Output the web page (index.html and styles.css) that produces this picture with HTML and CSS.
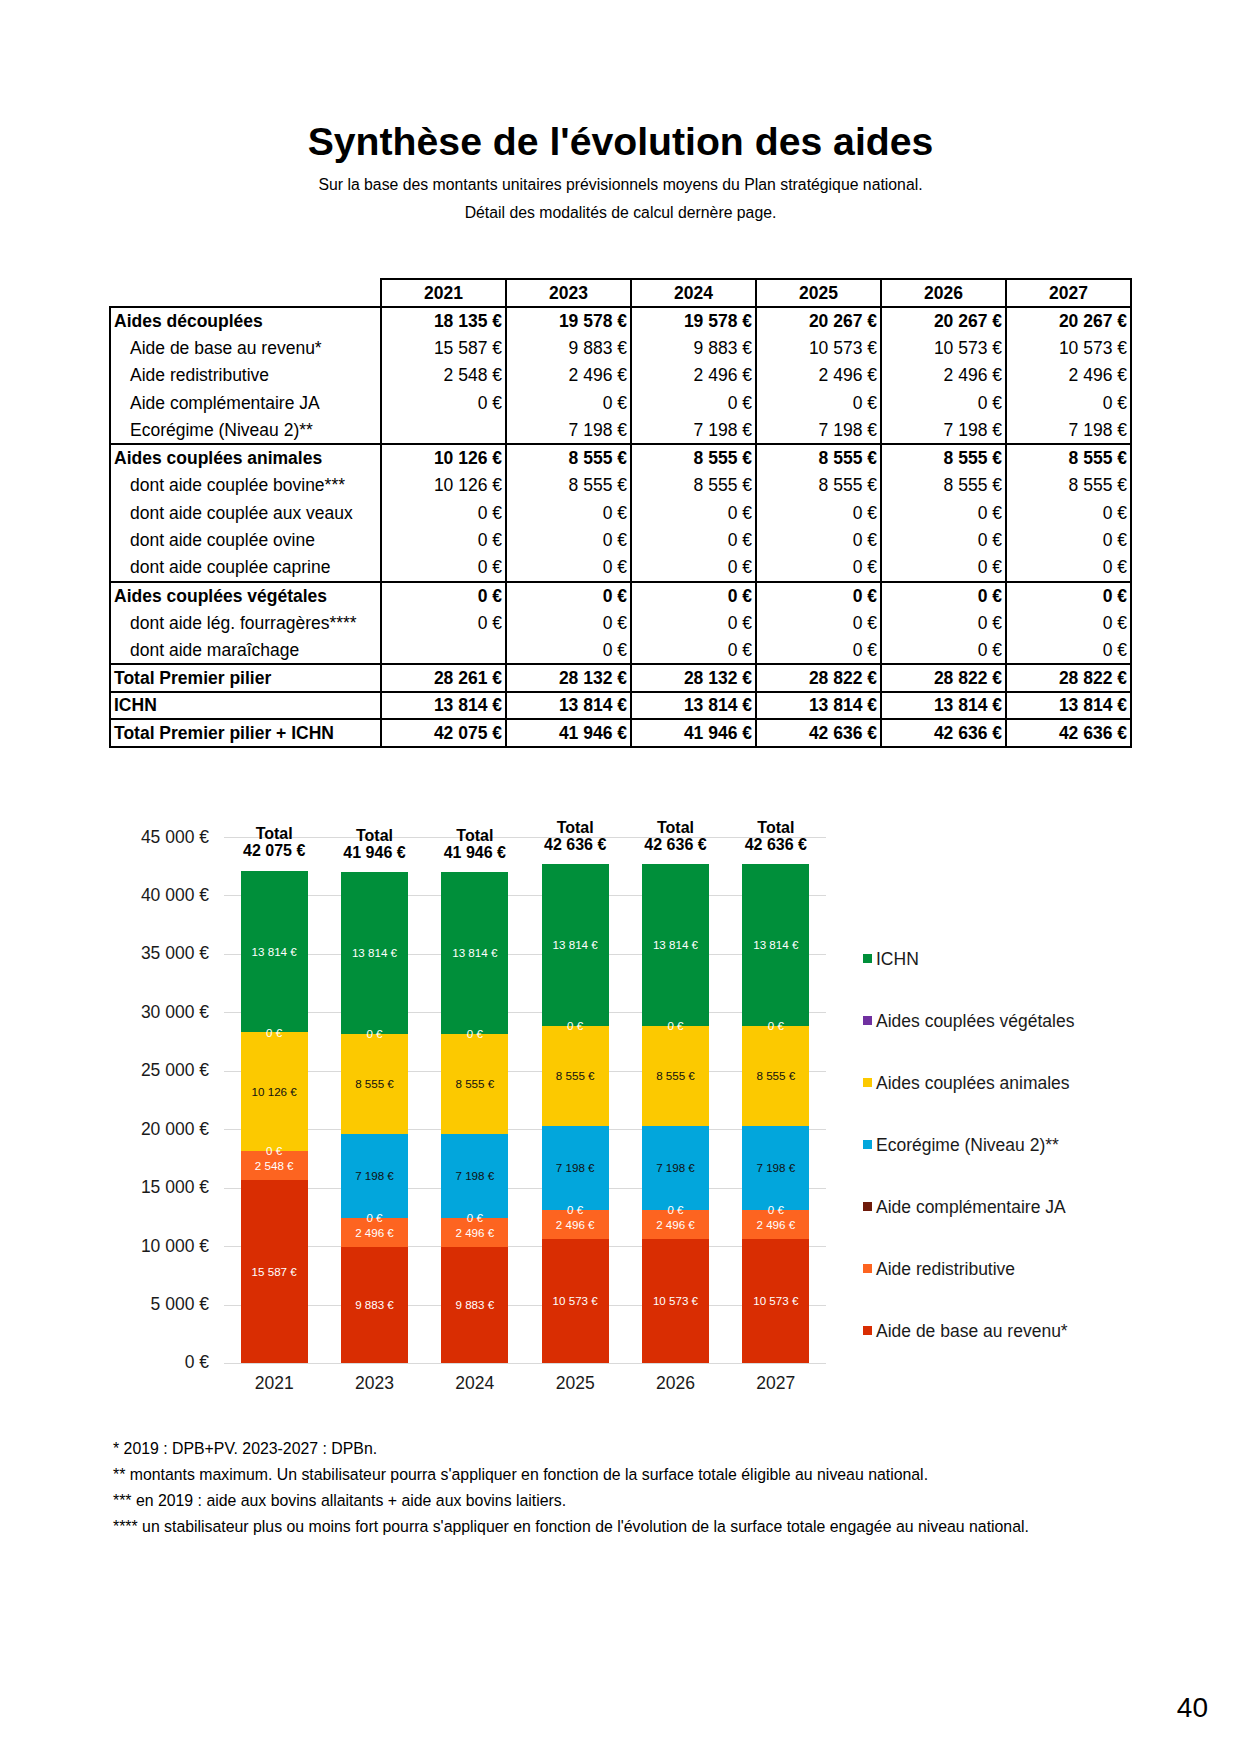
FILE: index.html
```html
<!DOCTYPE html>
<html lang="fr">
<head>
<meta charset="utf-8">
<title>Synthèse de l'évolution des aides</title>
<link rel="stylesheet" href="styles.css">
</head>
<body>
<div class="page">
  <h1 class="title">Synthèse de l'évolution des aides</h1>
  <p class="subtitle">Sur la base des montants unitaires prévisionnels moyens du Plan stratégique national.<br>Détail des modalités de calcul dernère page.</p>

  <table class="aids">
    <colgroup>
      <col class="c-label"><col><col><col><col><col><col>
    </colgroup>
    <thead>
      <tr><th class="blank"></th><th>2021</th><th>2023</th><th>2024</th><th>2025</th><th>2026</th><th>2027</th></tr>
    </thead>
    <tbody>
      <tr class="grp"><td>Aides découplées</td><td class="num">18&nbsp;135&nbsp;€</td><td class="num">19&nbsp;578&nbsp;€</td><td class="num">19&nbsp;578&nbsp;€</td><td class="num">20&nbsp;267&nbsp;€</td><td class="num">20&nbsp;267&nbsp;€</td><td class="num">20&nbsp;267&nbsp;€</td></tr>
      <tr><td class="sub">Aide de base au revenu*</td><td class="num">15&nbsp;587&nbsp;€</td><td class="num">9&nbsp;883&nbsp;€</td><td class="num">9&nbsp;883&nbsp;€</td><td class="num">10&nbsp;573&nbsp;€</td><td class="num">10&nbsp;573&nbsp;€</td><td class="num">10&nbsp;573&nbsp;€</td></tr>
      <tr><td class="sub">Aide redistributive</td><td class="num">2&nbsp;548&nbsp;€</td><td class="num">2&nbsp;496&nbsp;€</td><td class="num">2&nbsp;496&nbsp;€</td><td class="num">2&nbsp;496&nbsp;€</td><td class="num">2&nbsp;496&nbsp;€</td><td class="num">2&nbsp;496&nbsp;€</td></tr>
      <tr><td class="sub">Aide complémentaire JA</td><td class="num">0&nbsp;€</td><td class="num">0&nbsp;€</td><td class="num">0&nbsp;€</td><td class="num">0&nbsp;€</td><td class="num">0&nbsp;€</td><td class="num">0&nbsp;€</td></tr>
      <tr><td class="sub">Ecorégime (Niveau 2)**</td><td class="num"></td><td class="num">7&nbsp;198&nbsp;€</td><td class="num">7&nbsp;198&nbsp;€</td><td class="num">7&nbsp;198&nbsp;€</td><td class="num">7&nbsp;198&nbsp;€</td><td class="num">7&nbsp;198&nbsp;€</td></tr>
      <tr class="grp"><td>Aides couplées animales</td><td class="num">10&nbsp;126&nbsp;€</td><td class="num">8&nbsp;555&nbsp;€</td><td class="num">8&nbsp;555&nbsp;€</td><td class="num">8&nbsp;555&nbsp;€</td><td class="num">8&nbsp;555&nbsp;€</td><td class="num">8&nbsp;555&nbsp;€</td></tr>
      <tr><td class="sub">dont aide couplée bovine***</td><td class="num">10&nbsp;126&nbsp;€</td><td class="num">8&nbsp;555&nbsp;€</td><td class="num">8&nbsp;555&nbsp;€</td><td class="num">8&nbsp;555&nbsp;€</td><td class="num">8&nbsp;555&nbsp;€</td><td class="num">8&nbsp;555&nbsp;€</td></tr>
      <tr><td class="sub">dont aide couplée aux veaux</td><td class="num">0&nbsp;€</td><td class="num">0&nbsp;€</td><td class="num">0&nbsp;€</td><td class="num">0&nbsp;€</td><td class="num">0&nbsp;€</td><td class="num">0&nbsp;€</td></tr>
      <tr><td class="sub">dont aide couplée ovine</td><td class="num">0&nbsp;€</td><td class="num">0&nbsp;€</td><td class="num">0&nbsp;€</td><td class="num">0&nbsp;€</td><td class="num">0&nbsp;€</td><td class="num">0&nbsp;€</td></tr>
      <tr><td class="sub">dont aide couplée caprine</td><td class="num">0&nbsp;€</td><td class="num">0&nbsp;€</td><td class="num">0&nbsp;€</td><td class="num">0&nbsp;€</td><td class="num">0&nbsp;€</td><td class="num">0&nbsp;€</td></tr>
      <tr class="grp"><td>Aides couplées végétales</td><td class="num">0&nbsp;€</td><td class="num">0&nbsp;€</td><td class="num">0&nbsp;€</td><td class="num">0&nbsp;€</td><td class="num">0&nbsp;€</td><td class="num">0&nbsp;€</td></tr>
      <tr><td class="sub">dont aide lég. fourragères****</td><td class="num">0&nbsp;€</td><td class="num">0&nbsp;€</td><td class="num">0&nbsp;€</td><td class="num">0&nbsp;€</td><td class="num">0&nbsp;€</td><td class="num">0&nbsp;€</td></tr>
      <tr><td class="sub">dont aide maraîchage</td><td class="num"></td><td class="num">0&nbsp;€</td><td class="num">0&nbsp;€</td><td class="num">0&nbsp;€</td><td class="num">0&nbsp;€</td><td class="num">0&nbsp;€</td></tr>
      <tr class="grp"><td>Total Premier pilier</td><td class="num">28&nbsp;261&nbsp;€</td><td class="num">28&nbsp;132&nbsp;€</td><td class="num">28&nbsp;132&nbsp;€</td><td class="num">28&nbsp;822&nbsp;€</td><td class="num">28&nbsp;822&nbsp;€</td><td class="num">28&nbsp;822&nbsp;€</td></tr>
      <tr class="grp"><td>ICHN</td><td class="num">13&nbsp;814&nbsp;€</td><td class="num">13&nbsp;814&nbsp;€</td><td class="num">13&nbsp;814&nbsp;€</td><td class="num">13&nbsp;814&nbsp;€</td><td class="num">13&nbsp;814&nbsp;€</td><td class="num">13&nbsp;814&nbsp;€</td></tr>
      <tr class="grp last"><td>Total Premier pilier + ICHN</td><td class="num">42&nbsp;075&nbsp;€</td><td class="num">41&nbsp;946&nbsp;€</td><td class="num">41&nbsp;946&nbsp;€</td><td class="num">42&nbsp;636&nbsp;€</td><td class="num">42&nbsp;636&nbsp;€</td><td class="num">42&nbsp;636&nbsp;€</td></tr>
    </tbody>
  </table>

  <section class="chart">
    <div class="yaxis">
      <span>45 000 €</span><span>40 000 €</span><span>35 000 €</span><span>30 000 €</span><span>25 000 €</span><span>20 000 €</span><span>15 000 €</span><span>10 000 €</span><span>5 000 €</span><span>0 €</span>
    </div>
    <div class="plotcol">
      <div class="plot">
        <div class="cat">
          <div class="total">Total<br>42 075 €</div>
          <div class="stack">
            <div class="seg base" style="height:182.20px"><span>15 587 €</span></div>
            <div class="seg redis" style="height:29.78px"><span>2 548 €</span></div>
            <div class="seg ja" style="height:0px"><span>0 €</span></div>
            <div class="seg eco" style="height:0px"></div>
            <div class="seg anim" style="height:118.36px"><span>10 126 €</span></div>
            <div class="seg veg" style="height:0px"><span>0 €</span></div>
            <div class="seg ichn" style="height:161.47px"><span>13 814 €</span></div>
          </div>
        </div>
        <div class="cat">
          <div class="total">Total<br>41 946 €</div>
          <div class="stack">
            <div class="seg base" style="height:115.52px"><span>9 883 €</span></div>
            <div class="seg redis" style="height:29.18px"><span>2 496 €</span></div>
            <div class="seg ja" style="height:0px"><span>0 €</span></div>
            <div class="seg eco" style="height:84.14px"><span>7 198 €</span></div>
            <div class="seg anim" style="height:100.00px"><span>8 555 €</span></div>
            <div class="seg veg" style="height:0px"><span>0 €</span></div>
            <div class="seg ichn" style="height:161.47px"><span>13 814 €</span></div>
          </div>
        </div>
        <div class="cat">
          <div class="total">Total<br>41 946 €</div>
          <div class="stack">
            <div class="seg base" style="height:115.52px"><span>9 883 €</span></div>
            <div class="seg redis" style="height:29.18px"><span>2 496 €</span></div>
            <div class="seg ja" style="height:0px"><span>0 €</span></div>
            <div class="seg eco" style="height:84.14px"><span>7 198 €</span></div>
            <div class="seg anim" style="height:100.00px"><span>8 555 €</span></div>
            <div class="seg veg" style="height:0px"><span>0 €</span></div>
            <div class="seg ichn" style="height:161.47px"><span>13 814 €</span></div>
          </div>
        </div>
        <div class="cat">
          <div class="total">Total<br>42 636 €</div>
          <div class="stack">
            <div class="seg base" style="height:123.59px"><span>10 573 €</span></div>
            <div class="seg redis" style="height:29.18px"><span>2 496 €</span></div>
            <div class="seg ja" style="height:0px"><span>0 €</span></div>
            <div class="seg eco" style="height:84.14px"><span>7 198 €</span></div>
            <div class="seg anim" style="height:100.00px"><span>8 555 €</span></div>
            <div class="seg veg" style="height:0px"><span>0 €</span></div>
            <div class="seg ichn" style="height:161.47px"><span>13 814 €</span></div>
          </div>
        </div>
        <div class="cat">
          <div class="total">Total<br>42 636 €</div>
          <div class="stack">
            <div class="seg base" style="height:123.59px"><span>10 573 €</span></div>
            <div class="seg redis" style="height:29.18px"><span>2 496 €</span></div>
            <div class="seg ja" style="height:0px"><span>0 €</span></div>
            <div class="seg eco" style="height:84.14px"><span>7 198 €</span></div>
            <div class="seg anim" style="height:100.00px"><span>8 555 €</span></div>
            <div class="seg veg" style="height:0px"><span>0 €</span></div>
            <div class="seg ichn" style="height:161.47px"><span>13 814 €</span></div>
          </div>
        </div>
        <div class="cat">
          <div class="total">Total<br>42 636 €</div>
          <div class="stack">
            <div class="seg base" style="height:123.59px"><span>10 573 €</span></div>
            <div class="seg redis" style="height:29.18px"><span>2 496 €</span></div>
            <div class="seg ja" style="height:0px"><span>0 €</span></div>
            <div class="seg eco" style="height:84.14px"><span>7 198 €</span></div>
            <div class="seg anim" style="height:100.00px"><span>8 555 €</span></div>
            <div class="seg veg" style="height:0px"><span>0 €</span></div>
            <div class="seg ichn" style="height:161.47px"><span>13 814 €</span></div>
          </div>
        </div>
      </div>
      <div class="xaxis"><span>2021</span><span>2023</span><span>2024</span><span>2025</span><span>2026</span><span>2027</span></div>
    </div>
    <ul class="legend">
      <li class="l-ichn">ICHN</li>
      <li class="l-veg">Aides couplées végétales</li>
      <li class="l-anim">Aides couplées animales</li>
      <li class="l-eco">Ecorégime (Niveau 2)**</li>
      <li class="l-ja">Aide complémentaire JA</li>
      <li class="l-redis">Aide redistributive</li>
      <li class="l-base">Aide de base au revenu*</li>
    </ul>
  </section>

  <div class="notes">
    <p>* 2019 : DPB+PV. 2023-2027 : DPBn.</p>
    <p>** montants maximum. Un stabilisateur pourra s'appliquer en fonction de la surface totale éligible au niveau national.</p>
    <p>*** en 2019 : aide aux bovins allaitants + aide aux bovins laitiers.</p>
    <p>**** un stabilisateur plus ou moins fort pourra s'appliquer en fonction de l'évolution de la surface totale engagée au niveau national.</p>
  </div>

  <div class="pageno">40</div>
</div>
</body>
</html>
```

FILE: styles.css
```css
* { box-sizing: border-box; }
html, body { margin: 0; padding: 0; }
body {
  width: 1241px;
  height: 1755px;
  overflow: hidden;
  background: #fff;
  color: #000;
  font-family: "Liberation Sans", Arial, Helvetica, sans-serif;
}
.page { display: flex; flex-direction: column; }

.title {
  margin: 119px 0 0;
  text-align: center;
  font-size: 39.2px;
  line-height: 46px;
  font-weight: bold;
}
.subtitle {
  margin: 6px 0 0;
  text-align: center;
  font-size: 15.8px;
  line-height: 27.5px;
}

/* table */
.aids {
  margin: 52px 0 0 109px;
  border-collapse: collapse;
  table-layout: fixed;
  width: 1023px;
  font-size: 17.5px;
}
.aids col.c-label { width: 271px; }
.aids tr { height: 27.5px; }
.aids th, .aids td {
  padding: 0 3px;
  border-left: 2px solid #000;
  border-right: 2px solid #000;
  line-height: 20px;
  white-space: nowrap;
  vertical-align: middle;
}
.aids th {
  border-top: 2px solid #000;
  border-bottom: 2px solid #000;
  font-weight: bold;
  text-align: center;
}
.aids th.blank { border: none; }
.aids td.num { text-align: right; }
.aids td.sub { padding-left: 19px; }
.aids tr.grp td { border-top: 2px solid #000; font-weight: bold; }
.aids tr.last td { border-bottom: 2px solid #000; }

/* chart */
.chart {
  display: flex;
  align-items: flex-start;
  margin-top: 89px;
}
.yaxis {
  width: 100px;
  margin: -10px 0 0 109px;
  height: 546px;
  display: flex;
  flex-direction: column;
  justify-content: space-between;
  align-items: flex-end;
  font-size: 17.5px;
  line-height: 20px;
  color: #1a1a1a;
}
.plotcol { margin-left: 15px; width: 602px; }
.plot {
  height: 527px;
  padding-bottom: 1px;
  display: grid;
  grid-template-columns: repeat(6, 1fr);
  grid-template-rows: 526px;
  background-image: repeating-linear-gradient(to bottom, #d9d9d9 0px, #d9d9d9 1px, transparent 1px, transparent 58.444px);
}
.cat {
  min-height: 0;
  height: 526px;
  display: flex;
  flex-direction: column;
  justify-content: flex-end;
  align-items: center;
}
.total {
  font-weight: bold;
  font-size: 16px;
  line-height: 17px;
  text-align: center;
  margin-bottom: 11.5px;
  white-space: nowrap;
}
.stack {
  width: 67px;
  display: flex;
  flex-direction: column-reverse;
}
.seg {
  flex: none;
  display: flex;
  align-items: center;
  justify-content: center;
}
.seg span {
  position: relative;
  z-index: 1;
  font-size: 11.6px;
  line-height: 13px;
  white-space: nowrap;
  color: #fff;
}
.seg.base { background: #d92d02; }
.seg.redis { background: #fd6420; }
.seg.ja { background: #6e1a0a; }
.seg.eco { background: #02a6dc; }
.seg.anim { background: #fcc900; }
.seg.veg { background: #7030a0; }
.seg.ichn { background: #008f3a; }
.seg.eco span, .seg.anim span { color: #111; }

.xaxis {
  margin-top: 9px;
  display: grid;
  grid-template-columns: repeat(6, 1fr);
  text-align: center;
  font-size: 17.5px;
  line-height: 20px;
  color: #1a1a1a;
}

.legend {
  list-style: none;
  margin: 112px 0 0 37px;
  padding: 0;
  display: flex;
  flex-direction: column;
  gap: 42px;
  font-size: 17.5px;
  line-height: 20px;
  color: #1a1a1a;
}
.legend li { display: flex; align-items: center; white-space: nowrap; }
.legend li::before {
  content: "";
  width: 9px;
  height: 9px;
  margin-right: 4px;
  flex: none;
}
.l-ichn::before { background: #008f3a; }
.l-veg::before { background: #7030a0; }
.l-anim::before { background: #fcc900; }
.l-eco::before { background: #02a6dc; }
.l-ja::before { background: #6e1a0a; }
.l-redis::before { background: #fd6420; }
.l-base::before { background: #d92d02; }

/* notes */
.notes {
  margin: 43px 0 0 113px;
  font-size: 15.85px;
  line-height: 26px;
}
.notes p { margin: 0; }

.pageno {
  margin-top: 152px;
  padding-right: 33px;
  text-align: right;
  font-size: 28px;
  line-height: 32px;
}
```
